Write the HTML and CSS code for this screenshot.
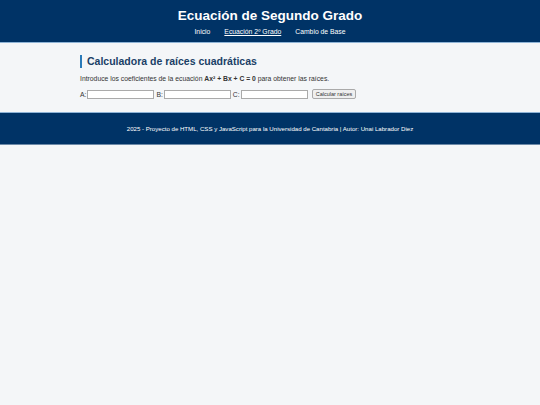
FILE: index.html
```html
<!DOCTYPE html>
<html lang="es">
  <head>
    <meta charset="UTF-8" />
    <meta name="viewport" content="width=device-width, initial-scale=1.0" />
    <title>Ecuación de Segundo Grado</title>
    <link rel="stylesheet" href="styles.css">
  </head>
  <body>
    <header class="site-header">
      <h1>Ecuación de Segundo Grado</h1>
      <nav class="nav">
        <a href="#">Inicio</a>
        <a href="#" class="active">Ecuación 2º Grado</a>
        <a href="#">Cambio de Base</a>
      </nav>
    </header>

    <main class="content">
      <h2>Calculadora de raíces cuadráticas</h2>
      <p>Introduce los coeficientes de la ecuación <strong>Ax² + Bx + C = 0</strong> para obtener las raíces.</p>
      <form class="coef-form">
        <label for="a">A:</label>
        <input type="text" id="a" />
        <label for="b">B:</label>
        <input type="text" id="b" />
        <label for="c">C:</label>
        <input type="text" id="c" />
        <button type="button">Calcular raíces</button>
      </form>
    </main>

    <footer class="site-footer">
      <p>2025 - Proyecto de HTML, CSS y JavaScript para la Universidad de Cantabria | Autor: Unai Labrador Diez</p>
    </footer>
  </body>
</html>
```

FILE: styles.css
```css
body {
  font-family: "Liberation Sans", Arial, sans-serif;
  margin: 0;
  background-color: #f4f6f8;
  color: #222;
}
.site-header {
  background-color: #003366;
  color: white;
  text-align: center;
  padding: 8px 0 7px;
  border-bottom: 1px solid #8fb4d6;
}
.site-header h1 {
  margin: 0 0 5px;
  font-size: 13.5px;
}
.nav {
  display: flex;
  justify-content: center;
  gap: 14px;
  font-size: 6.8px;
}
.nav a {
  color: white;
  text-decoration: none;
}
.nav a.active {
  text-decoration: underline;
}
.content {
  max-width: 380px;
  margin: 0 auto;
  padding: 12px 0 13px;
}
.content h2 {
  margin: 0 0 7px;
  padding-left: 5px;
  border-left: 2px solid #2a7ab8;
  color: #1a3f66;
  font-size: 10.5px;
  line-height: 13px;
}
.content p {
  margin: 0 0 7px;
  font-size: 6.8px;
  color: #333;
}
.coef-form {
  display: flex;
  align-items: center;
  gap: 1px;
  font-size: 6.8px;
  color: #333;
}
.coef-form input {
  width: 63px;
  height: 5px;
  padding: 1px;
  border: 1px solid #aaa;
  margin-right: 1px;
}
.coef-form button {
  font-family: inherit;
  font-size: 5.5px;
  padding: 1px 3px;
  margin-left: 2px;
  background-color: #efefef;
  border: 1px solid #aaa;
  border-radius: 2px;
  color: #333;
}
.site-footer {
  background-color: #003366;
  color: white;
  text-align: center;
  border-top: 1px solid #8fb4d6;
  border-bottom: 1px solid #6d8aa8;
  padding: 12px 0;
}
.site-footer p {
  margin: 0;
  font-size: 6.1px;
}
```
